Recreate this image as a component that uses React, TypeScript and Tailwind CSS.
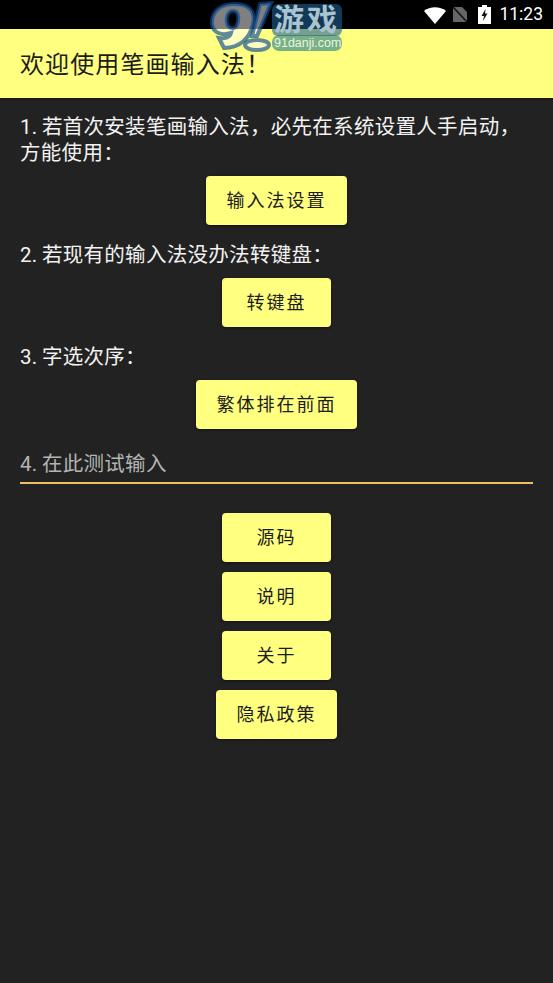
const F = '[font-family:Roboto,"Noto_Sans_CJK_SC",sans-serif]';

function Btn({ children, className = "" }: { children: string; className?: string }) {
  return (
    <div className="flex justify-center">
      <div className={`h-[49px] flex items-center justify-center rounded-[4px] bg-[#ffff80] text-[18px] tracking-[2px] text-[#1c1c1c] shadow-[0_1px_3px_rgba(0,0,0,0.5)] ${className}`}>
        {children}
      </div>
    </div>
  );
}

function Logo() {
  return (
    <div className="absolute left-[206px] top-0 h-[56px] w-[140px]">
      <svg width="140" height="56" viewBox="0 0 140 56" className="absolute left-0 top-0">
        <g stroke="#0d4a90" strokeOpacity="0.65" strokeWidth="4" fill="#ffffff" fillOpacity="0.5">
          <path fillRule="evenodd" d="M28 4 C14 4 5 12 6 24 C7 33 16 36 25 33 C24 37 19 39 13 38 L18 48 C34 48 44 38 47 24 C50 10 42 4 28 4 Z M27 11 C22 11 20 17 21 23 C22 28 26 29 30 27 C33 22 34 11 27 11 Z" />
          <path d="M54 4 L65 3 L51 36 L46 36 Z" />
          <ellipse cx="51" cy="45" rx="12" ry="5" />
        </g>
        <rect x="66" y="35" width="70" height="16" rx="7" fill="#3f8f8a" fillOpacity="0.7" />
        <rect x="66" y="4" width="70" height="32" rx="6" fill="#1f5f95" fillOpacity="0.6" />
      </svg>
      <div className={`absolute left-[68px] top-[6px] text-[30px] leading-[28px] font-bold tracking-[3px] text-[#a9c4cf] ${F}`}>游戏</div>
      <div className="absolute left-[68px] top-[37px] text-[12.5px] leading-[13px] text-[#edf3e0] [font-family:'Liberation_Sans',sans-serif]">91danji.com</div>
    </div>
  );
}

function StatusIcons() {
  return (
    <div className="flex items-center">
      <svg width="24" height="18" viewBox="0 0 24 18">
        <path d="M1 5 C7 0 17 0 23 5 L12 18 Z" fill="#fff" />
      </svg>
      <svg width="16" height="17" viewBox="0 0 16 17" className="ml-[5px]">
        <path d="M1 1 H10 L15 6 V16 H1 Z" fill="#666" />
        <path d="M1 1 L15 16" stroke="#111" strokeWidth="1.5" />
      </svg>
      <svg width="13" height="19" viewBox="0 0 13 19" className="ml-[10px]">
        <path d="M4 0 H9 V2 H13 V19 H0 V2 H4 Z" fill="#fff" />
        <path d="M7.5 4 L3.5 11 H6 L5 16 L9.5 8.5 H7 Z" fill="#111" />
      </svg>
      <span className="ml-[8px] text-[17.5px] leading-none text-white [font-family:Roboto,sans-serif]">11:23</span>
    </div>
  );
}

export default function App() {
  return (
    <div className={`relative h-[983px] w-[553px] overflow-hidden bg-[#222222] ${F}`}>
      <div className="flex h-[29px] items-center justify-end bg-black pr-[10px]">
        <StatusIcons />
      </div>
      <div className="flex h-[69px] items-center bg-[#ffff80] px-5 pt-[3px] text-[24px] tracking-[1.1px] text-[#1c1c1c] shadow-[0_1px_3px_rgba(0,0,0,0.5)]">
        欢迎使用笔画输入法！
      </div>
      <div className="px-5 pt-[16px] text-[20.5px] leading-[26px] text-[#f2f2f2]">
        <p className="tracking-[0.3px] [word-spacing:-1px]">1. 若首次安装笔画输入法，必先在系统设置人手启动，方能使用：</p>
        <div className="mt-[10px]"><Btn className="w-[141px]">输入法设置</Btn></div>
        <p className="mt-[17px] tracking-[0.3px] [word-spacing:-1px]">2. 若现有的输入法没办法转键盘：</p>
        <div className="mt-[10px]"><Btn className="w-[109px]">转键盘</Btn></div>
        <p className="mt-[17px] tracking-[0.3px] [word-spacing:-1px]">3. 字选次序：</p>
        <div className="mt-[10px]"><Btn className="w-[161px]">繁体排在前面</Btn></div>
        <div className="mt-[22px] h-[33px] border-b-2 border-[#f0c060] tracking-[0.3px] text-[#b4b4b4] [word-spacing:-1px]">4. 在此测试输入</div>
        <div className="mt-[29px] flex flex-col gap-[10px]">
          <Btn className="w-[109px]">源码</Btn>
          <Btn className="w-[109px]">说明</Btn>
          <Btn className="w-[109px]">关于</Btn>
          <Btn className="w-[121px]">隐私政策</Btn>
        </div>
      </div>
      <Logo />
    </div>
  );
}
